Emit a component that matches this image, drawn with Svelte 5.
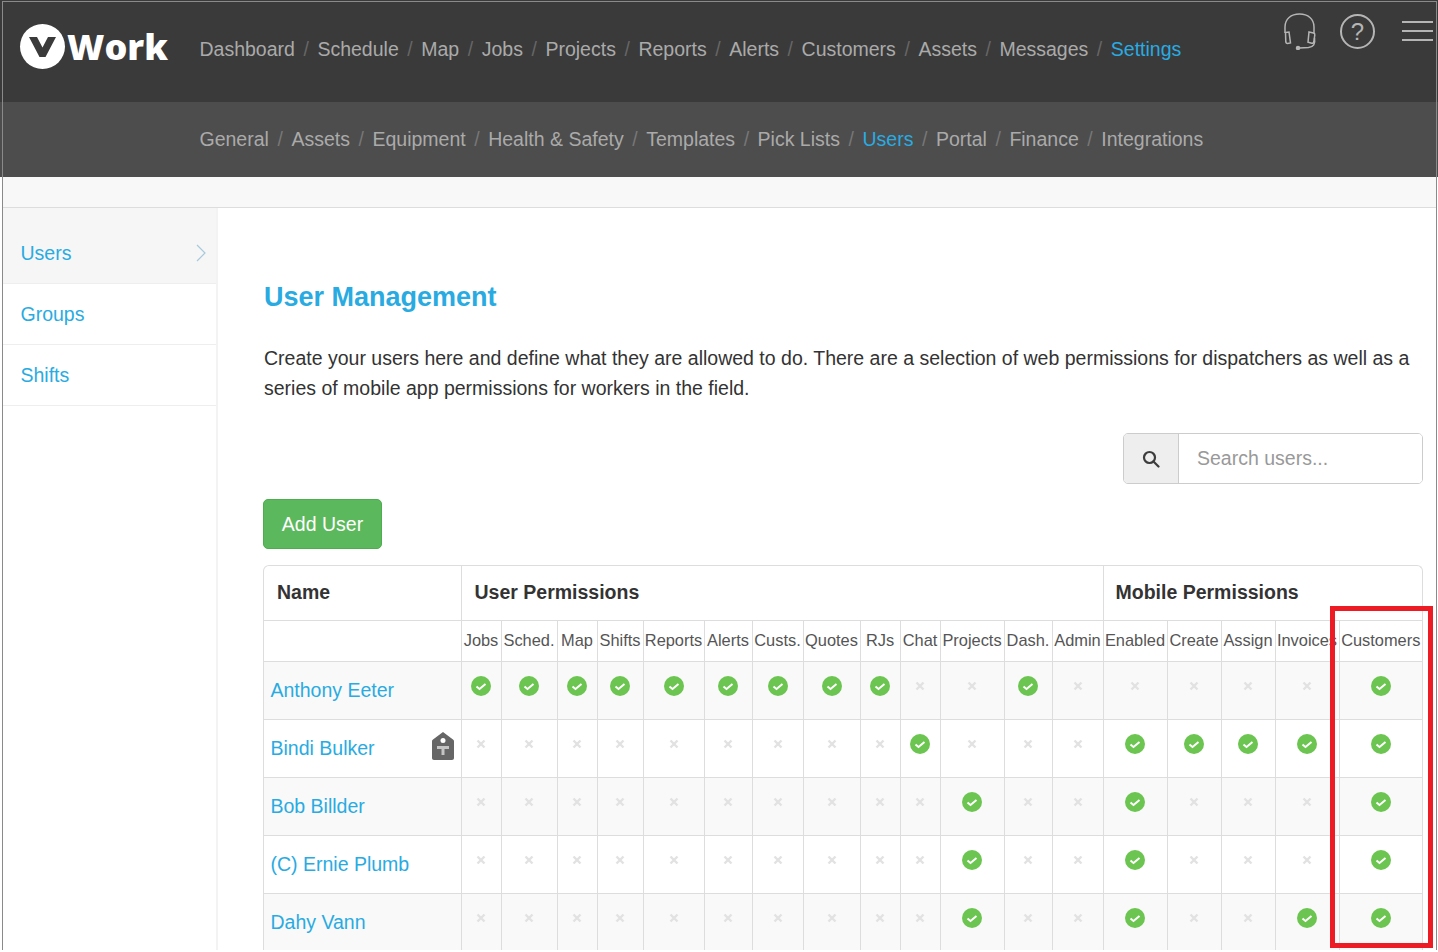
<script lang="ts">
    const mainNav = ["Dashboard", "Schedule", "Map", "Jobs", "Projects", "Reports", "Alerts", "Customers", "Assets", "Messages", "Settings"];
    const subNav = ["General", "Assets", "Equipment", "Health & Safety", "Templates", "Pick Lists", "Users", "Portal", "Finance", "Integrations"];
    const sideNav = ["Users", "Groups", "Shifts"];

    const perms = ["Jobs", "Sched.", "Map", "Shifts", "Reports", "Alerts", "Custs.", "Quotes", "RJs", "Chat", "Projects", "Dash.", "Admin", "Enabled", "Create", "Assign", "Invoices", "Customers"];
    const widths = [40, 56, 40, 46, 61, 48, 51, 57, 40, 40, 64, 48, 51, 64, 54, 54, 64, 83];

    const users = [
        { name: "Anthony Eeter", tag: false, on: "111111111001000001" },
        { name: "Bindi Bulker", tag: true, on: "000000000100011111" },
        { name: "Bob Billder", tag: false, on: "000000000010010001" },
        { name: "(C) Ernie Plumb", tag: false, on: "000000000010010001" },
        { name: "Dahy Vann", tag: false, on: "000000000010010011" }
    ];
</script>

<div class="frame">
    <header class="topbar">
        <div class="logo">
            <span class="badge">
                <svg viewBox="0 0 27 20" width="27" height="20"><path d="M0 0h8l5.500 10.500L19 0h8L16.500 20h-6z" fill="#3a3a3a" /></svg>
            </span>
            <span class="word">Work</span>
        </div>
        <nav class="crumbs">
            {#each mainNav as item, i}
                {#if i > 0}<span class="sep">/</span>{/if}
                <span class:active={item == "Settings"}>{item}</span>
            {/each}
        </nav>
        <div class="tools">
            <svg class="headset" viewBox="0 0 34 38" width="34" height="38" fill="none" stroke="#b5b5b5" stroke-width="1.500">
                <path d="M2 21v-6C2 7 8 2 16.500 2S31 7 31 15v6" />
                <path d="M2.500 20.500l3.500-.5 1.500 11-3 .5c-1 0-1.500-.5-1.700-1.500z" />
                <path d="M26 20l4.500 1c1 .3 1.500 1 1.300 2l-1 7c-.2 1-1 1.500-2 1.300l-3.800-1z" />
                <path d="M31.500 26c1 6-1 9-6 9.500l-9 .5" />
                <circle cx="15" cy="36" r="1.500" fill="#b5b5b5" />
            </svg>
            <span class="help">?</span>
            <span class="burger"><i></i><i></i><i></i></span>
        </div>
    </header>

    <nav class="subbar crumbs">
        {#each subNav as item, i}
            {#if i > 0}<span class="sep">/</span>{/if}
            <span class:active={item == "Users"}>{item}</span>
        {/each}
    </nav>

    <div class="strip"></div>

    <div class="page">
        <aside class="sidebar">
            {#each sideNav as item, i}
                <div class="side-item" class:current={i == 0}>
                    {item}
                    {#if i == 0}
                        <svg viewBox="0 0 10 18" width="10" height="18" fill="none" stroke="#a9c9dc" stroke-width="1.200"><path d="M1 1l8 8-8 8" /></svg>
                    {/if}
                </div>
            {/each}
        </aside>

        <main class="content">
            <h1>User Management</h1>
            <p>Create your users here and define what they are allowed to do. There are a selection of web permissions for dispatchers as well as a series of mobile app permissions for workers in the field.</p>

            <div class="search">
                <span class="addon">
                    <svg viewBox="0 0 18 18" width="18" height="18" fill="none" stroke="#3d3d3d" stroke-width="2.200"><circle cx="7.500" cy="7.500" r="5.500" /><path d="M11.500 11.500l5 5" stroke-linecap="round" /></svg>
                </span>
                <input placeholder="Search users..." />
            </div>

            <button class="add">Add User</button>

            <div class="table-wrap">
                <table>
                    <colgroup>
                        <col style="width:197px" />
                        {#each widths as w}<col style="width:{w}px" />{/each}
                    </colgroup>
                    <thead>
                        <tr class="group">
                            <th>Name</th>
                            <th colspan="13">User Permissions</th>
                            <th colspan="5">Mobile Permissions</th>
                        </tr>
                        <tr class="perm">
                            <th></th>
                            {#each perms as p}<th>{p}</th>{/each}
                        </tr>
                    </thead>
                    <tbody>
                        {#each users as u}
                            <tr>
                                <td class="name">
                                    {u.name}
                                    {#if u.tag}
                                        <svg class="tag" viewBox="0 0 22 28" width="22" height="28">
                                            <path fill="#666" d="M11 0l10 7.500c.7.500 1 1 1 2V26c0 1-.8 2-2 2H2c-1.200 0-2-1-2-2V9.500c0-1 .3-1.500 1-2z" />
                                            <circle cx="11" cy="8.500" r="2.500" fill="#fff" />
                                            <path fill="#c4c4c4" d="M5 14h12v3h-4.500v6h-3v-6H5z" />
                                        </svg>
                                    {/if}
                                </td>
                                {#each u.on as flag}
                                    <td class="cell">
                                        {#if flag == "1"}
                                            <svg class="mark" viewBox="0 0 20 20" width="20" height="20"><circle cx="10" cy="10" r="10" fill="#6cc551" /><path d="M5.500 10.500l3 2.500 6-5" fill="none" stroke="#fff" stroke-width="2" /></svg>
                                        {:else}
                                            <svg class="mark" viewBox="0 0 20 20" width="20" height="20"><path d="M6.500 6.500l7 7M13.500 6.500l-7 7" fill="none" stroke="#e2e2e2" stroke-width="2.400" /></svg>
                                        {/if}
                                    </td>
                                {/each}
                            </tr>
                        {/each}
                    </tbody>
                </table>
            </div>
        </main>
    </div>

    <div class="highlight"></div>
</div>

<style>
    :global(body) {
        margin: 0;
        background: #fff linear-gradient(#3a3a3a 102px, #4d4d4d 102px) no-repeat 0 0 / 100% 177px;
    }

    .frame {
        position: relative;
        box-sizing: border-box;
        width: 1435px;
        height: 950px;
        margin: 0 0 0 2px;
        top: 1px;
        border: 1px solid #8a8a8a;
        overflow: hidden;
        font-family: "Liberation Sans", Arial, sans-serif;
        font-size: 19.5px;
        color: #333;
        background: #fff;
    }

    .topbar {
        display: flex;
        align-items: flex-start;
        height: 100px;
        background: #3a3a3a;
    }

    .logo {
        display: flex;
        align-items: center;
        width: 196.5px;
        padding: 22px 0 0 17px;
        box-sizing: border-box;
        flex: none;
    }

    .badge {
        display: flex;
        align-items: center;
        justify-content: center;
        width: 45px;
        height: 45px;
        border-radius: 50%;
        background: #fff;
        flex: none;
    }

    .word {
        margin-left: 2px;
        margin-top: -1px;
        font-family: "Open Sans", Lato, sans-serif;
        font-weight: 800;
        font-size: 36px;
        line-height: 45px;
        color: #fff;
    }

    .crumbs {
        display: flex;
        gap: 8px;
        color: #aaa;
        white-space: nowrap;
    }

    .topbar .crumbs {
        padding-top: 36px;
    }

    .sep {
        color: #666;
        margin: 0 0.55px;
    }

    .active {
        color: #29abe2;
    }

    .tools {
        position: absolute;
        top: 10px;
        right: 3px;
        display: flex;
        align-items: center;
    }

    .help {
        display: block;
        box-sizing: border-box;
        width: 35px;
        height: 35px;
        margin: 0 27px 0 23px;
        border: 2px solid #b5b5b5;
        border-radius: 50%;
        text-align: center;
        line-height: 31px;
        font-size: 24px;
        color: #b5b5b5;
    }

    .burger {
        display: flex;
        flex-direction: column;
        gap: 7px;
        width: 31px;
    }

    .burger i {
        height: 2px;
        background: #b5b5b5;
    }

    .subbar {
        height: 75px;
        align-items: center;
        padding-left: 196.5px;
        background: #4d4d4d;
    }

    .subbar .sep {
        color: #777;
    }

    .strip {
        height: 30px;
        background: #f8f8f8;
        border-bottom: 1px solid #ddd;
    }

    .page {
        display: flex;
    }

    .sidebar {
        flex: none;
        width: 213px;
        border-right: 2px solid #f3f3f3;
        min-height: 760px;
    }

    .side-item {
        display: flex;
        align-items: center;
        justify-content: space-between;
        height: 60px;
        padding: 0 10px 0 17.5px;
        color: #29abe2;
        border-bottom: 1px solid #eee;
    }

    .side-item.current {
        height: 76px;
        padding-top: 15px;
        box-sizing: border-box;
        background: #f6f6f6;
    }

    .content {
        flex: 1;
        min-width: 0;
        padding: 70px 0 0 46px;
    }

    h1 {
        margin: 0;
        font-size: 27px;
        line-height: 38px;
        color: #29abe2;
    }

    p {
        margin: 27px 13px 0 0;
        line-height: 30px;
    }

    .search {
        display: flex;
        width: 300px;
        height: 51px;
        margin: 30px 13px 15px auto;
        box-sizing: border-box;
        border: 1px solid #ccc;
        border-radius: 5px;
        overflow: hidden;
    }

    .addon {
        display: flex;
        align-items: center;
        justify-content: center;
        width: 54px;
        flex: none;
        background: #eee;
        border-right: 1px solid #ccc;
    }

    input {
        flex: 1;
        min-width: 0;
        border: 0;
        outline: 0;
        padding: 0 18px;
        font: inherit;
    }

    input::placeholder {
        color: #999;
        opacity: 1;
    }

    .add {
        display: block;
        width: 119px;
        height: 50px;
        margin-left: -1px;
        padding: 0;
        border: 1px solid #4cae4c;
        border-radius: 5px;
        background: #5cb85c;
        color: #fff;
        font: inherit;
    }

    .table-wrap {
        width: 1160px;
        margin: 16px 0 0 -1px;
        box-sizing: border-box;
        border: 1px solid #ddd;
        border-bottom: 0;
        border-radius: 6px 6px 0 0;
    }

    table {
        table-layout: fixed;
        width: 1158px;
        border-collapse: collapse;
    }

    th,
    td {
        padding: 0;
        border: 1px solid #ddd;
    }

    tr > :first-child {
        border-left: 0;
    }

    tr > :last-child {
        border-right: 0;
    }

    .group th {
        height: 52px;
        border-top: 0;
        padding: 0 0 2px 13px;
        text-align: left;
        white-space: nowrap;
    }

    .group th:last-child {
        padding-left: 12px;
    }

    .perm th {
        height: 38px;
        padding-bottom: 2px;
        font-weight: normal;
        font-size: 16.4px;
        color: #555;
        text-align: center;
        white-space: nowrap;
    }

    tbody td {
        height: 57px;
    }

    tbody tr:nth-child(odd) {
        background: #f9f9f9;
    }

    .name {
        position: relative;
        padding-left: 6.5px;
        color: #29abe2;
    }

    .tag {
        position: absolute;
        right: 7px;
        top: 12px;
    }

    .cell {
        text-align: center;
    }

    .mark {
        display: block;
        margin: -10px auto 0;
    }

    .highlight {
        position: absolute;
        left: 1327px;
        top: 604px;
        width: 103px;
        height: 342px;
        box-sizing: border-box;
        border: 5px solid #ed1c24;
    }
</style>
